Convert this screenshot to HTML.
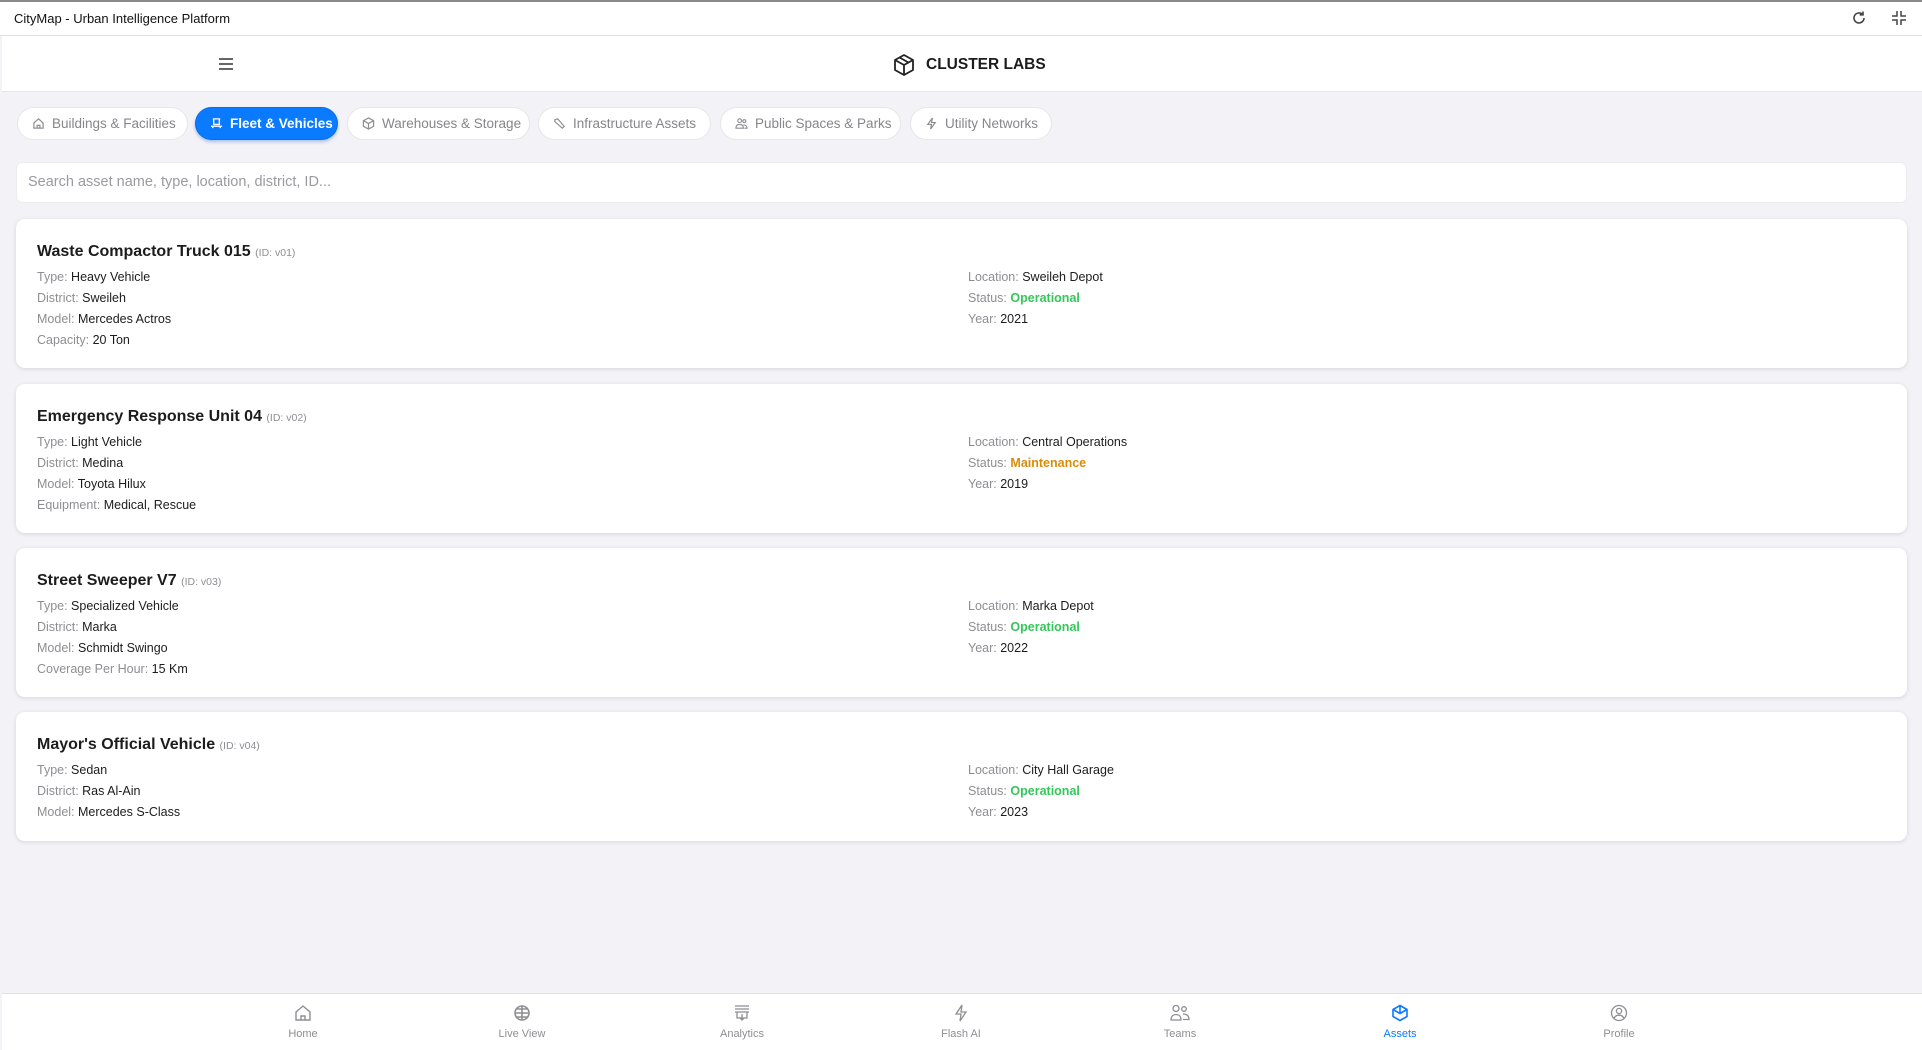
<!DOCTYPE html>
<html><head><meta charset="utf-8"><style>
*{box-sizing:border-box;margin:0;padding:0}
body{width:1922px;height:1050px;background:#f2f2f7;font-family:"Liberation Sans",sans-serif;position:relative;overflow:hidden;color:#1c1c1e}
.tb{position:absolute;left:0;top:0;width:1922px;height:36px;background:#fff;border-top:2px solid #8a8a8a;border-bottom:1px solid #e0e0e0}
.tb .t{position:absolute;left:14px;top:9px;font-size:13px;color:#111}
.hd{position:absolute;left:2px;top:36px;width:1920px;height:56px;background:#fff;border-bottom:1px solid #e6e6ea}
.logo{position:absolute;left:890px;top:17px;display:flex;align-items:center;gap:10px;font-weight:bold;font-size:15.5px;color:#1c1c1e}
.tabs{position:absolute;top:107px;left:0}
.tab{position:absolute;top:0;height:33px;border-radius:17px;background:#fff;border:1px solid #e5e5ea;font-size:13.5px;color:#86868b;display:flex;align-items:center;padding-left:14px;gap:7px}
.tab.a{background:#0a7aff;color:#fff;border-color:#0a6ee6;box-shadow:0 2px 3px rgba(0,80,200,.3);font-weight:600}
.tab svg{flex:none}
.search{position:absolute;left:16px;top:162px;width:1891px;height:41px;background:#fff;border-radius:6px;border:1px solid #ececf0;font-size:14.5px;color:#9a9aa0;padding:11px 11px}
.card{position:absolute;left:16px;width:1891px;background:#fff;border-radius:9px;box-shadow:0 1px 4px rgba(0,0,0,.12)}
.card h3{position:absolute;left:21px;top:24px;font-size:16px;font-weight:bold;color:#1c1c1e}
.card h3 small{font-size:10.5px;color:#8e8e93;font-weight:normal}
.col{position:absolute;top:48px;font-size:12.5px;line-height:21px;color:#1c1c1e}
.col span{color:#8e8e93}
.g{color:#34c759;font-weight:bold}.o{color:#d98c0a;font-weight:bold}
.nav{position:absolute;left:2px;top:993px;width:1920px;height:57px;background:#fff;border-top:1px solid #e0e0e4}
.ni{position:absolute;top:10px;width:80px;margin-left:-40px;text-align:center;font-size:11px;color:#8e8e93}
.ni svg{display:block;margin:0 auto 6px}
.ni.a{color:#0a7aff}
</style></head><body>
<div class="tb"><div class="t">CityMap - Urban Intelligence Platform</div>
<svg style="position:absolute;left:1851px;top:8px" width="16" height="16" viewBox="0 0 16 16" fill="none" stroke="#444" stroke-width="1.6"><path d="M13 8a5 5 0 1 1-1.5-3.6"/><path d="M12 1.5v3.3H8.7"/></svg>
<svg style="position:absolute;left:1891px;top:8px" width="16" height="16" viewBox="0 0 16 16" fill="none" stroke="#444" stroke-width="1.5"><path d="M6 1v5H1M10 1v5h5M6 15v-5H1M10 15v-5h5"/></svg>
</div>
<div class="hd">
<svg style="position:absolute;left:216px;top:21px" width="16" height="14" viewBox="0 0 16 14" stroke="#333" stroke-width="1.6"><path d="M1 2h14M1 7h14M1 12h14"/></svg>
<div class="logo"><svg width="24" height="24" viewBox="0 0 24 24" fill="none" stroke="#222" stroke-width="1.8" stroke-linejoin="round"><path d="M12 2l9 5v10l-9 5-9-5V7z"/><path d="M3 7l9 5 9-5M12 12v10"/><path d="M7.5 4.5l9 5"/></svg>CLUSTER LABS</div>
</div>
<div class="tabs">
<div class="tab" style="left:17px;width:171px"><svg width="13" height="13" viewBox="0 0 14 14" fill="none" stroke="#8e8e93" stroke-width="1.3"><path d="M2 6.5L7 2l5 4.5V12H2z"/><path d="M5.5 12V9h3v3"/></svg>Buildings &amp; Facilities</div>
<div class="tab a" style="left:195px;width:143px"><svg width="13" height="13" viewBox="0 0 14 14" fill="none" stroke="#fff" stroke-width="1.4"><path d="M3 2h8M4 2v6h6V2M1 10h12M3 10v2M11 10v2"/></svg>Fleet &amp; Vehicles</div>
<div class="tab" style="left:347px;width:183px"><svg width="13" height="13" viewBox="0 0 14 14" fill="none" stroke="#8e8e93" stroke-width="1.3"><path d="M7 1l5.5 3v6L7 13 1.5 10V4z M1.5 4L7 7l5.5-3M7 7v6"/></svg>Warehouses &amp; Storage</div>
<div class="tab" style="left:538px;width:173px"><svg width="13" height="13" viewBox="0 0 14 14" fill="none" stroke="#8e8e93" stroke-width="1.3"><path d="M2 3l3-1 7 8-2 2-8-7z"/></svg>Infrastructure Assets</div>
<div class="tab" style="left:720px;width:181px"><svg width="13" height="13" viewBox="0 0 14 14" fill="none" stroke="#8e8e93" stroke-width="1.2"><circle cx="5" cy="4" r="2"/><circle cx="10" cy="4.5" r="1.6"/><path d="M1 12c0-3 2-4 4-4s4 1 4 4zM9 8.5c2 0 4 1 4 3.5h-3"/></svg>Public Spaces &amp; Parks</div>
<div class="tab" style="left:910px;width:142px"><svg width="13" height="13" viewBox="0 0 14 14" fill="none" stroke="#8e8e93" stroke-width="1.3"><path d="M8 1L3 8h4l-1 5 5-7H7z"/></svg>Utility Networks</div>
</div>
<div class="search">Search asset name, type, location, district, ID...</div>

<div class="card" style="top:219px;height:149px"><h3>Waste Compactor Truck 015 <small>(ID: v01)</small></h3>
<div class="col" style="left:21px"><span>Type:</span> Heavy Vehicle<br><span>District:</span> Sweileh<br><span>Model:</span> Mercedes Actros<br><span>Capacity:</span> 20 Ton</div>
<div class="col" style="left:952px"><span>Location:</span> Sweileh Depot<br><span>Status:</span> <b class="g">Operational</b><br><span>Year:</span> 2021</div></div>

<div class="card" style="top:384px;height:149px"><h3>Emergency Response Unit 04 <small>(ID: v02)</small></h3>
<div class="col" style="left:21px"><span>Type:</span> Light Vehicle<br><span>District:</span> Medina<br><span>Model:</span> Toyota Hilux<br><span>Equipment:</span> Medical, Rescue</div>
<div class="col" style="left:952px"><span>Location:</span> Central Operations<br><span>Status:</span> <b class="o">Maintenance</b><br><span>Year:</span> 2019</div></div>

<div class="card" style="top:548px;height:149px"><h3>Street Sweeper V7 <small>(ID: v03)</small></h3>
<div class="col" style="left:21px"><span>Type:</span> Specialized Vehicle<br><span>District:</span> Marka<br><span>Model:</span> Schmidt Swingo<br><span>Coverage Per Hour:</span> 15 Km</div>
<div class="col" style="left:952px"><span>Location:</span> Marka Depot<br><span>Status:</span> <b class="g">Operational</b><br><span>Year:</span> 2022</div></div>

<div class="card" style="top:712px;height:129px"><h3>Mayor's Official Vehicle <small>(ID: v04)</small></h3>
<div class="col" style="left:21px"><span>Type:</span> Sedan<br><span>District:</span> Ras Al-Ain<br><span>Model:</span> Mercedes S-Class</div>
<div class="col" style="left:952px"><span>Location:</span> City Hall Garage<br><span>Status:</span> <b class="g">Operational</b><br><span>Year:</span> 2023</div></div>

<div class="nav">
<div class="ni" style="left:301px"><svg width="18" height="18" viewBox="0 0 18 18" fill="none" stroke="#8e8e93" stroke-width="1.4"><path d="M2 8L9 2l7 6v8H2z"/><path d="M7 16v-4h4v4"/></svg>Home</div>
<div class="ni" style="left:520px"><svg width="18" height="18" viewBox="0 0 18 18" fill="none" stroke="#8e8e93" stroke-width="1.6"><circle cx="9" cy="9" r="7"/><path d="M2 9h14M9 2v14M4 5h10M4 13h10"/></svg>Live View</div>
<div class="ni" style="left:740px"><svg width="18" height="18" viewBox="0 0 18 18" fill="none" stroke="#8e8e93" stroke-width="1.3"><path d="M2 2h14M2 5h14M2 8h14M4 8v6h10V8M9 10v6M7 14l2 2 2-2"/></svg>Analytics</div>
<div class="ni" style="left:959px"><svg width="18" height="18" viewBox="0 0 18 18" fill="none" stroke="#8e8e93" stroke-width="1.3"><path d="M10 1L4 10h5l-1 7 6-9H9z"/></svg>Flash AI</div>
<div class="ni" style="left:1178px"><svg width="20" height="18" viewBox="0 0 20 18" fill="none" stroke="#8e8e93" stroke-width="1.3"><circle cx="6" cy="4.5" r="3"/><circle cx="14" cy="5" r="2.3"/><path d="M1 16c0-4 2.5-5.5 5-5.5s5 1.5 5 5.5zM13 10c3 0 6 1 6 5.5h-6"/></svg>Teams</div>
<div class="ni a" style="left:1398px"><svg width="18" height="18" viewBox="0 0 18 18" fill="none" stroke="#0a7aff" stroke-width="1.6" stroke-linejoin="round"><path d="M9 1.5l7 4v7l-7 4-7-4v-7z"/><path d="M2 5.5L9 9.5l7-4M9 9.5V1.5"/></svg>Assets</div>
<div class="ni" style="left:1617px"><svg width="18" height="18" viewBox="0 0 18 18" fill="none" stroke="#8e8e93" stroke-width="1.3"><circle cx="9" cy="9" r="7.5"/><circle cx="9" cy="7" r="2.6"/><path d="M4 14.5c1-2.5 3-3.3 5-3.3s4 .8 5 3.3"/></svg>Profile</div>
</div>
</body></html>
